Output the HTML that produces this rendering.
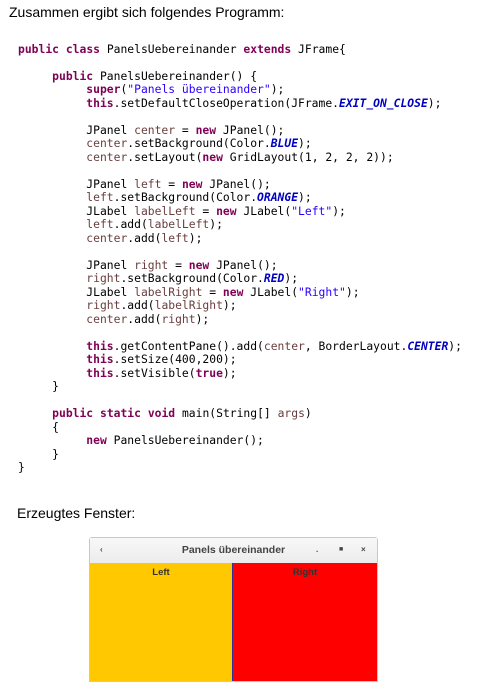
<!DOCTYPE html>
<html><head><meta charset="utf-8"><style>
body{margin:0;background:#fff;width:482px;height:685px;overflow:hidden;position:relative;font-family:"Liberation Sans",sans-serif;}
.t{position:absolute;font-size:14px;color:#000;}
pre{position:absolute;left:18px;top:43px;margin:0;font-family:"DejaVu Sans Mono",monospace;font-size:11.35px;line-height:13.48px;color:#000;}
.k{color:#7f0055;font-weight:bold}
.s{color:#2a00ff}
.v{color:#6a3e3e}
.c{color:#0000c0;font-weight:bold;font-style:italic}
.win{position:absolute;left:89px;top:537px;width:287px;height:143px;border:1px solid #c8c8c8;border-radius:3px 3px 0 0;background:#f2f2f2;}
.tb{position:absolute;left:0;top:0;width:287px;height:25px;background:linear-gradient(#f8f8f8,#ececec);font-size:10.5px;font-weight:bold;color:#444;text-align:center;line-height:24px;}
.l{position:absolute;left:0;top:25px;width:142px;height:118px;background:#ffc800;}
.r{position:absolute;left:143px;top:25px;width:144px;height:118px;background:#ff0000;}
.mid{position:absolute;left:142px;top:25px;width:1px;height:118px;background:#3030a0;}
.lb{position:absolute;top:4px;width:100%;text-align:center;font-size:9.5px;font-weight:bold;color:#333;}
</style></head><body>
<div class="t" style="left:9px;top:4px;">Zusammen ergibt sich folgendes Programm:</div>
<pre><span class="k">public</span> <span class="k">class</span> PanelsUebereinander <span class="k">extends</span> JFrame{

     <span class="k">public</span> PanelsUebereinander() {
          <span class="k">super</span>(<span class="s">"Panels übereinander"</span>);
          <span class="k">this</span>.setDefaultCloseOperation(JFrame.<span class="c">EXIT_ON_CLOSE</span>);

          JPanel <span class="v">center</span> = <span class="k">new</span> JPanel();
          <span class="v">center</span>.setBackground(Color.<span class="c">BLUE</span>);
          <span class="v">center</span>.setLayout(<span class="k">new</span> GridLayout(1, 2, 2, 2));

          JPanel <span class="v">left</span> = <span class="k">new</span> JPanel();
          <span class="v">left</span>.setBackground(Color.<span class="c">ORANGE</span>);
          JLabel <span class="v">labelLeft</span> = <span class="k">new</span> JLabel(<span class="s">"Left"</span>);
          <span class="v">left</span>.add(<span class="v">labelLeft</span>);
          <span class="v">center</span>.add(<span class="v">left</span>);

          JPanel <span class="v">right</span> = <span class="k">new</span> JPanel();
          <span class="v">right</span>.setBackground(Color.<span class="c">RED</span>);
          JLabel <span class="v">labelRight</span> = <span class="k">new</span> JLabel(<span class="s">"Right"</span>);
          <span class="v">right</span>.add(<span class="v">labelRight</span>);
          <span class="v">center</span>.add(<span class="v">right</span>);

          <span class="k">this</span>.getContentPane().add(<span class="v">center</span>, BorderLayout.<span class="c">CENTER</span>);
          <span class="k">this</span>.setSize(400,200);
          <span class="k">this</span>.setVisible(<span class="k">true</span>);
     }

     <span class="k">public</span> <span class="k">static</span> <span class="k">void</span> main(String[] <span class="v">args</span>)
     {
          <span class="k">new</span> PanelsUebereinander();
     }
}</pre>
<div class="t" style="left:17px;top:505px;">Erzeugtes Fenster:</div>
<div class="win">
 <div class="tb">Panels übereinander
  <span style="position:absolute;left:10px;top:0;font-size:8px;">‹</span>
  <span style="position:absolute;left:226px;top:0;font-size:8px;">.</span>
  <span style="position:absolute;left:249px;top:0;font-size:7px;">■</span>
  <span style="position:absolute;left:271px;top:0;font-size:8px;">×</span>
 </div>
 <div class="l"><div class="lb">Left</div></div>
 <div class="mid"></div>
 <div class="r"><div class="lb">Right</div></div>
</div>
</body></html>
